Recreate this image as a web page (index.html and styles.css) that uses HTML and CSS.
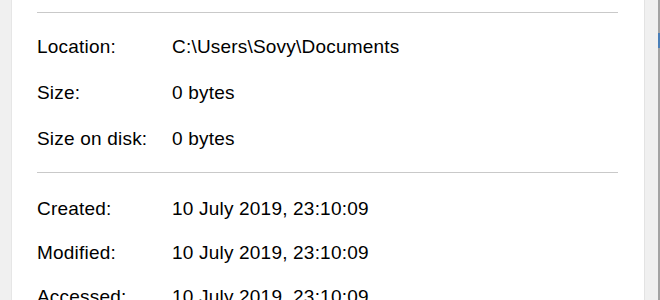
FILE: index.html
```html
<!DOCTYPE html>
<html lang="en">
<head>
    <meta charset="UTF-8">
    <title>Documents Properties</title>
    <link rel="stylesheet" href="styles.css">
</head>
<body>
    <div class="window">
        <div class="side-left"></div>

        <div class="panel">
            <div class="divider first"></div>

            <div class="group">
                <div class="row"><span class="label">Location:</span><span class="value">C:\Users\Sovy\Documents</span></div>
                <div class="row"><span class="label">Size:</span><span class="value">0 bytes</span></div>
                <div class="row"><span class="label">Size on disk:</span><span class="value">0 bytes</span></div>
            </div>

            <div class="divider second"></div>

            <div class="group dates">
                <div class="row"><span class="label">Created:</span><span class="value">10 July 2019, 23:10:09</span></div>
                <div class="row"><span class="label">Modified:</span><span class="value">10 July 2019, 23:10:09</span></div>
                <div class="row"><span class="label">Accessed:</span><span class="value">10 July 2019, 23:10:09</span></div>
            </div>
        </div>

        <div class="side-right"></div>
        <div class="behind">
            <div class="behind-tab"></div>
        </div>
    </div>
</body>
</html>
```

FILE: styles.css
```css
* {
    margin: 0;
    padding: 0;
    box-sizing: border-box;
}

body {
    font-family: "Liberation Sans", Arial, sans-serif;
    background: #ffffff;
    color: #000000;
    overflow: hidden;
}

.window {
    display: flex;
    height: 300px;
    width: 660px;
}

.side-left {
    width: 12px;
    background: #f0f0f0;
    border-right: 1px solid #e6e6e6;
}

.panel {
    flex: 1;
    background: #ffffff;
    padding-top: 12px;
    padding-left: 25px;
}

.divider {
    width: 581px;
    height: 1px;
    background: #c9c9c9;
}

.divider.first {
    margin-bottom: 23px;
}

.divider.second {
    margin-top: 22px;
    margin-bottom: 25px;
}

.group {
    display: flex;
    flex-direction: column;
    gap: 24px;
}

.group.dates {
    gap: 22px;
}

.row {
    display: flex;
    font-size: 19px;
    line-height: 22px;
    letter-spacing: 0.2px;
    white-space: nowrap;
}

.label {
    width: 135px;
}

.side-right {
    width: 14px;
    background: #f0f0f0;
    border-left: 1px solid #e3e3e3;
}

.behind {
    width: 2px;
    background: #a3a3a3;
    padding-top: 33px;
}

.behind-tab {
    height: 15px;
    background: #4a7fb8;
}
```
